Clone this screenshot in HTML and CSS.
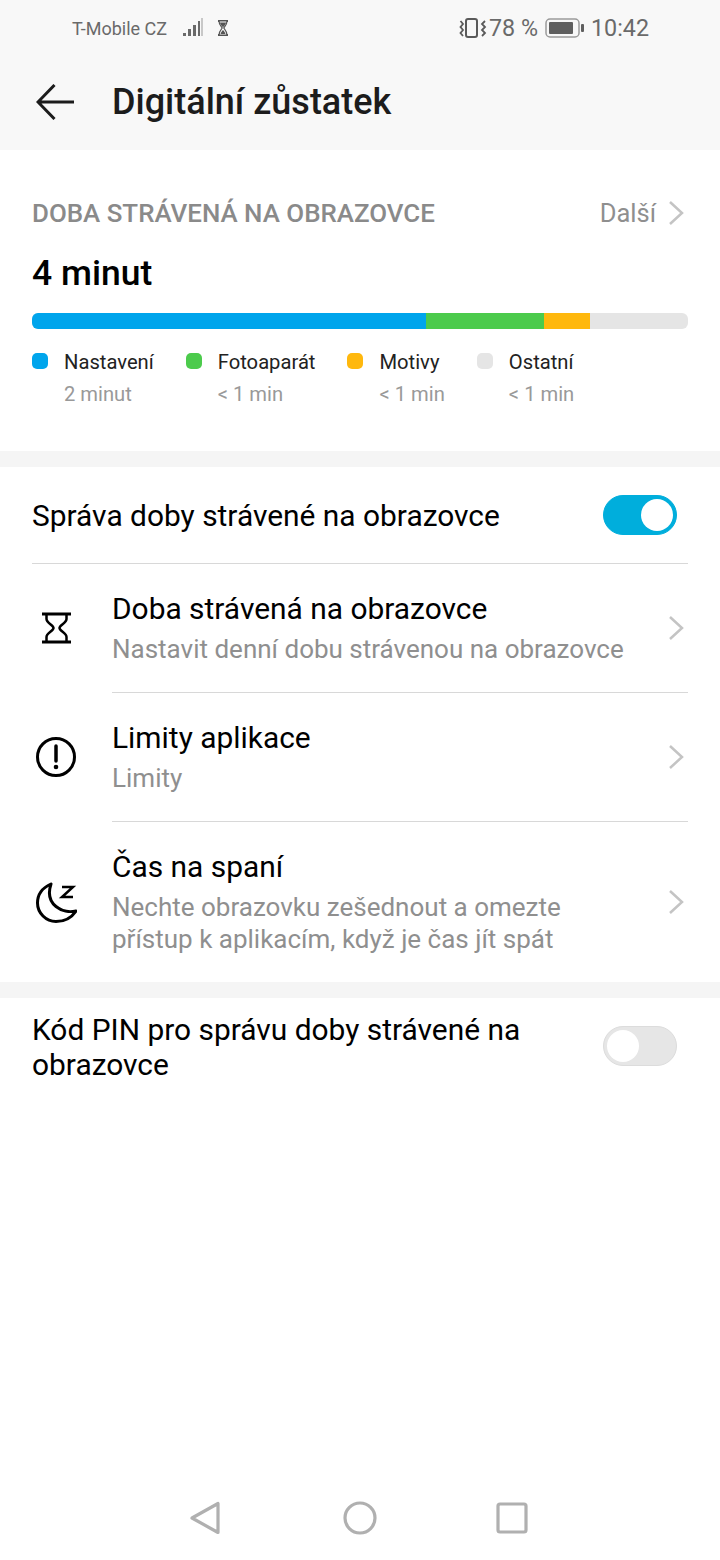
FILE: index.html
```html
<!DOCTYPE html>
<html lang="cs">
<head>
    <meta charset="UTF-8">
    <title>Digitální zůstatek</title>
    <link rel="stylesheet" href="styles.css">
</head>
<body>
    <div class="page">
        <div class="top-area">
            <div class="status-bar">
                <div class="status-left">
                    <span class="carrier">T-Mobile CZ</span>
                    <svg class="signal-icon" width="22" height="20" viewBox="0 0 22 20">
                        <rect x="1" y="15" width="3" height="3" fill="#6a6a6a"/>
                        <rect x="6" y="11" width="3" height="7" fill="#6a6a6a"/>
                        <rect x="11" y="7" width="3" height="11" fill="#6a6a6a"/>
                        <rect x="16" y="3" width="2" height="15" fill="#6a6a6a"/>
                        <rect x="19" y="0" width="2" height="18" fill="#c8c8c8"/>
                    </svg>
                    <svg class="timer-icon" width="12" height="16" viewBox="0 0 12 16">
                        <path d="M1 1H11M1 15H11" stroke="#555" stroke-width="2" fill="none"/>
                        <path d="M2 1H10C10 5 7.500 6.500 6.800 8C7.500 9.500 10 11 10 15H2C2 11 4.500 9.500 5.200 8C4.500 6.500 2 5 2 1Z" fill="#fff" stroke="#555" stroke-width="1.200"/>
                        <path d="M3 2.500H9C9 4.500 7 6 6 7.500C5 6 3 4.500 3 2.500ZM3.500 14C4 12 5 11 6 10C7 11 8 12 8.500 14Z" fill="#555"/>
                    </svg>
                </div>
                <div class="status-right">
                    <svg class="vibrate-icon" width="28" height="22" viewBox="0 0 28 22">
                        <rect x="7" y="2" width="11" height="18" rx="2" fill="none" stroke="#5a5a5a" stroke-width="2"/>
                        <path d="M1.500 4L4 7L1.500 10L4 13L1.500 16L4 19M26 4L23 7L26 10L23 13L26 16L23 19" fill="none" stroke="#5a5a5a" stroke-width="1.800"/>
                    </svg>
                    <span class="battery-text">78 %</span>
                    <svg class="battery-icon" width="40" height="20" viewBox="0 0 40 20">
                        <rect x="1" y="1" width="33" height="18" rx="4" fill="none" stroke="#9a9a9a" stroke-width="1.500"/>
                        <rect x="4" y="4" width="24" height="12" rx="1" fill="#5f5f5f"/>
                        <rect x="36" y="6" width="3" height="8" rx="1" fill="#5f5f5f"/>
                    </svg>
                    <span class="clock">10:42</span>
                </div>
            </div>
            <div class="toolbar">
                <svg class="back-icon" width="38" height="36" viewBox="0 0 38 36">
                    <path d="M18.500 1L2 18L18.500 35M2 18H38" fill="none" stroke="#1c1c1c" stroke-width="3"/>
                </svg>
                <h1>Digitální zůstatek</h1>
            </div>
        </div>

        <div class="usage-card">
            <div class="usage-head">
                <span class="usage-title">DOBA STRÁVENÁ NA OBRAZOVCE</span>
                <span class="more-link">Další
                    <svg class="chevron" width="16" height="26" viewBox="0 0 16 26"><path d="M2 2L14 13L2 24" fill="none" stroke="#c4c4c4" stroke-width="2.500"/></svg>
                </span>
            </div>
            <div class="usage-total">4 minut</div>
            <div class="usage-bar">
                <div class="seg seg-blue"></div>
                <div class="seg seg-green"></div>
                <div class="seg seg-yellow"></div>
            </div>
            <div class="legend">
                <div class="legend-item">
                    <span class="dot dot-blue"></span>
                    <div><div class="legend-name">Nastavení</div><div class="legend-time">2 minut</div></div>
                </div>
                <div class="legend-item">
                    <span class="dot dot-green"></span>
                    <div><div class="legend-name">Fotoaparát</div><div class="legend-time">&lt; 1 min</div></div>
                </div>
                <div class="legend-item">
                    <span class="dot dot-yellow"></span>
                    <div><div class="legend-name">Motivy</div><div class="legend-time">&lt; 1 min</div></div>
                </div>
                <div class="legend-item">
                    <span class="dot dot-gray"></span>
                    <div><div class="legend-name">Ostatní</div><div class="legend-time">&lt; 1 min</div></div>
                </div>
            </div>
        </div>

        <div class="gap-band"></div>

        <div class="switch-row switch-main">
            <span class="row-title">Správa doby strávené na obrazovce</span>
            <span class="toggle toggle-on"><span class="knob"></span></span>
        </div>

        <div class="menu">
            <div class="menu-row menu-first">
                <div class="menu-icon">
                    <svg width="29" height="32" viewBox="0 0 29 32">
                        <path d="M0 2H29M0 30H29" stroke="#000" stroke-width="3" fill="none"/>
                        <path d="M4.500 2V7C4.500 11 11.500 13 11.500 16C11.500 19 4.500 21 4.500 25V30M24.500 2V7C24.500 11 17.500 13 17.500 16C17.500 19 24.500 21 24.500 25V30" stroke="#000" stroke-width="2.500" fill="none"/>
                    </svg>
                </div>
                <div class="menu-body">
                    <div class="row-title">Doba strávená na obrazovce</div>
                    <div class="row-sub">Nastavit denní dobu strávenou na obrazovce</div>
                </div>
                <svg class="chevron" width="16" height="26" viewBox="0 0 16 26"><path d="M2 2L14 13L2 24" fill="none" stroke="#c4c4c4" stroke-width="2.500"/></svg>
            </div>
            <div class="menu-row">
                <div class="menu-icon">
                    <svg width="40" height="40" viewBox="0 0 40 40">
                        <circle cx="20" cy="20" r="18.500" fill="none" stroke="#000" stroke-width="3"/>
                        <path d="M20 9V24" stroke="#000" stroke-width="3.500" stroke-linecap="round"/>
                        <circle cx="20" cy="30" r="2.300" fill="#000"/>
                    </svg>
                </div>
                <div class="menu-body">
                    <div class="row-title">Limity aplikace</div>
                    <div class="row-sub">Limity</div>
                </div>
                <svg class="chevron" width="16" height="26" viewBox="0 0 16 26"><path d="M2 2L14 13L2 24" fill="none" stroke="#c4c4c4" stroke-width="2.500"/></svg>
            </div>
            <div class="menu-row">
                <div class="menu-icon">
                    <svg width="42" height="42" viewBox="0 0 42 42">
                        <path d="M16 3C7 7 2.500 14 2.500 22C2.500 32 11 40.500 21 40.500C30 40.500 37 36 41 30C28 33 9 24 16 3Z" fill="none" stroke="#000" stroke-width="3" stroke-linejoin="round"/>
                        <path d="M27 6H38L27 16H38" fill="none" stroke="#000" stroke-width="2.500"/>
                    </svg>
                </div>
                <div class="menu-body">
                    <div class="row-title">Čas na spaní</div>
                    <div class="row-sub">Nechte obrazovku zešednout a omezte<br>přístup k aplikacím, když je čas jít spát</div>
                </div>
                <svg class="chevron" width="16" height="26" viewBox="0 0 16 26"><path d="M2 2L14 13L2 24" fill="none" stroke="#c4c4c4" stroke-width="2.500"/></svg>
            </div>
        </div>

        <div class="gap-band"></div>

        <div class="switch-row switch-pin">
            <span class="row-title">Kód PIN pro správu doby strávené na obrazovce</span>
            <span class="toggle"><span class="knob"></span></span>
        </div>

        <div class="nav-bar">
            <svg width="32" height="34" viewBox="0 0 32 34"><path d="M29 2.500V31.500L3 17Z" fill="none" stroke="#b0b0b0" stroke-width="3.200" stroke-linejoin="round"/></svg>
            <svg width="34" height="34" viewBox="0 0 34 34"><circle cx="17" cy="17" r="15" fill="none" stroke="#b0b0b0" stroke-width="3.200"/></svg>
            <svg class="nav-square" width="32" height="32" viewBox="0 0 32 32"><rect x="2" y="2" width="28" height="28" rx="2" fill="none" stroke="#b0b0b0" stroke-width="3.200"/></svg>
        </div>
    </div>
</body>
</html>
```

FILE: styles.css
```css
html, body {
    margin: 0;
    padding: 0;
}
body {
    font-family: Roboto, "Noto Sans", sans-serif;
    background-color: #fff;
    color: #000;
}
.page {
    display: flex;
    flex-direction: column;
    height: 1560px;
}
.top-area {
    background-color: #f8f8f8;
    height: 150px;
}
.status-bar {
    display: flex;
    justify-content: space-between;
    align-items: center;
    height: 56px;
    padding: 0 71px 0 72px;
    color: #6a6a6a;
}
.status-left, .status-right {
    display: flex;
    align-items: center;
}
.carrier {
    font-size: 18px;
}
.signal-icon {
    margin-left: 15px;
}
.timer-icon {
    margin-left: 13px;
}
.battery-text, .clock {
    font-size: 23.3px;
}
.vibrate-icon {
    margin-right: 2px;
}
.battery-icon {
    margin: 0 6px 0 7px;
}
.toolbar {
    display: flex;
    align-items: center;
    height: 92px;
    padding-left: 36px;
}
.toolbar h1 {
    margin: 0 0 0 38px;
    font-size: 36px;
    font-weight: 500;
    color: #1c1c1c;
}
.usage-card {
    height: 301px;
    padding: 0 32px;
    box-sizing: border-box;
}
.usage-head {
    display: flex;
    justify-content: space-between;
    align-items: center;
    padding-top: 47px;
    height: 32px;
}
.usage-title {
    font-size: 25.9px;
    font-weight: 500;
    color: #8a8a8a;
}
.more-link {
    display: flex;
    align-items: center;
    gap: 12px;
    padding-right: 4px;
    font-size: 25.5px;
    color: #8f8f8f;
}
.usage-total {
    margin-top: 23px;
    font-size: 35.5px;
    font-weight: 500;
    line-height: 42px;
}
.usage-bar {
    display: flex;
    height: 16px;
    margin-top: 19px;
    border-radius: 6px;
    overflow: hidden;
    background-color: #e5e5e5;
}
.seg-blue {
    width: 394px;
    background-color: #00a5ec;
}
.seg-green {
    width: 118px;
    background-color: #4ccb4c;
}
.seg-yellow {
    width: 46px;
    background-color: #ffb80d;
}
.legend {
    display: flex;
    gap: 32px;
    margin-top: 20px;
}
.legend-item {
    display: flex;
    gap: 16px;
}
.dot {
    width: 16px;
    height: 16px;
    margin-top: 4px;
    border-radius: 5px;
}
.dot-blue { background-color: #00a5ec; }
.dot-green { background-color: #4ccb4c; }
.dot-yellow { background-color: #ffb80d; }
.dot-gray { background-color: #e5e5e5; }
.legend-name {
    font-size: 20.2px;
    line-height: 26px;
    color: #222;
}
.legend-time {
    margin-top: 6px;
    font-size: 20.2px;
    line-height: 26px;
    color: #999;
}
.gap-band {
    height: 16px;
    background-color: #f5f5f5;
}
.switch-row {
    display: flex;
    justify-content: space-between;
    align-items: center;
    padding: 0 43px 0 32px;
}
.switch-main {
    height: 96px;
}
.switch-main .row-title {
    margin-top: 2px;
}
.switch-pin {
    height: 96px;
}
.switch-pin .row-title {
    width: 530px;
    margin-top: 2px;
    line-height: 35px;
}
.row-title {
    font-size: 29.9px;
    line-height: 36px;
    color: #000;
}
.toggle {
    display: flex;
    align-items: center;
    box-sizing: border-box;
    width: 74px;
    height: 40px;
    padding: 3px;
    border-radius: 20px;
    background-color: #e6e6e6;
    border: 1px solid #dcdcdc;
}
.toggle-on {
    justify-content: flex-end;
    background-color: #00aedc;
    border-color: #00aedc;
}
.knob {
    width: 32px;
    height: 32px;
    border-radius: 50%;
    background-color: #fff;
}
.menu {
    margin: 0 32px;
    border-top: 1px solid #d8d8d8;
}
.menu-row {
    position: relative;
    display: flex;
    align-items: center;
    height: 128px;
    border-top: 1px solid #d8d8d8;
    margin-left: 80px;
}
.menu-first {
    border-top: none;
}
.menu-row:last-child {
    height: 160px;
}
.menu-icon {
    position: absolute;
    left: -80px;
    top: 0;
    bottom: 0;
    display: flex;
    align-items: center;
    justify-content: center;
    width: 48px;
}
.menu-body {
    flex: 1;
}
.row-sub {
    margin-top: 6px;
    font-size: 26px;
    line-height: 32px;
    color: #8f8f8f;
}
.menu-row .chevron {
    margin-right: 4px;
}
.nav-bar {
    display: flex;
    align-items: center;
    gap: 122px;
    margin-top: auto;
    height: 84px;
    padding-left: 189px;
}
.nav-square {
    margin-left: -3px;
}
```
